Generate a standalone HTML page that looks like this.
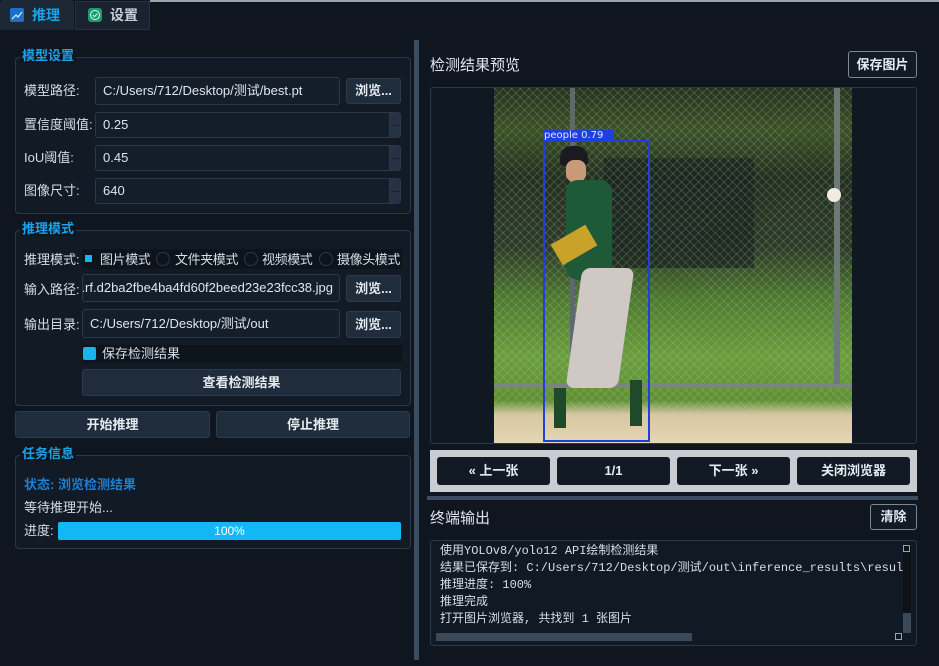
<!DOCTYPE html>
<html><head><meta charset="utf-8"><style>
*{box-sizing:border-box;margin:0;padding:0}
body{width:939px;height:666px;background:#0f1620;position:relative;overflow:hidden;font-family:"Liberation Sans","Noto Sans CJK SC",sans-serif;font-size:13px;line-height:16px;color:#d6dde6}
.a{position:absolute}
.grp{position:absolute;border:1px solid #2a3848;border-radius:4px;background:#111a25}
.gt{position:absolute;color:#1aa3e8;font-weight:bold;font-size:13px;background:#0f1620;padding:0 2px;line-height:14px}
.inp{position:absolute;background:#141e2a;border:1px solid #2a3848;border-radius:3px;color:#dfe5ec;padding-left:7px;line-height:24px;white-space:nowrap;overflow:hidden}
.btn{position:absolute;background:#1f2c3c;border:1px solid #2c3b4d;border-radius:3px;color:#e6ebf0;font-weight:bold;text-align:center;font-size:13px}
.lbl{position:absolute;color:#d6dde6;transform:translateY(-3px)}
.spin{position:absolute;right:0;width:11px;top:0;bottom:0;background:#243244;border-left:1px solid #2a3848}
.spin:after{content:"";position:absolute;left:0;right:0;top:50%;height:1px;background:#1a2430}
.nb{position:absolute;top:457px;height:28px;width:113px;background:#121a26;border-radius:3px;color:#e6ebf0;font-weight:bold;text-align:center;line-height:28px;font-size:13px}
.mono{font-family:"Liberation Mono","Noto Sans CJK SC",monospace;font-size:12px;line-height:17px;white-space:nowrap;color:#d6dde6}
</style></head><body>
<!-- tabs -->
<div class="a" style="left:150px;top:0;width:789px;height:2px;background:#9aa4ad"></div>
<div class="a" style="left:0;top:0;width:74px;height:30px;background:#1d2836;border-radius:3px 3px 0 0"></div>
<div class="a" style="left:10px;top:8px;width:14px;height:14px;background:#1d6fc7;border-radius:2px"><svg width="14" height="14"><path d="M2 11 L6 7 L8 9 L12 4" stroke="#cfe6ff" stroke-width="1.3" fill="none"/></svg></div>
<div class="a" style="left:32px;top:7px;color:#1aa3e8;font-weight:bold;font-size:14px">推理</div>
<div class="a" style="left:75px;top:1px;width:75px;height:29px;background:#19222e;border:1px solid #263240"></div>
<div class="a" style="left:88px;top:8px;width:14px;height:14px;background:#1c9a72;border-radius:3px"><svg width="14" height="14"><circle cx="7" cy="7" r="4.5" stroke="#d8fff0" fill="none" stroke-width="1"/><path d="M4.8 7 L6.5 8.6 L9.3 5.6" stroke="#d8fff0" fill="none" stroke-width="1.1"/></svg></div>
<div class="a" style="left:110px;top:7px;color:#c8d0d8;font-weight:bold;font-size:14px">设置</div>

<!-- splitter -->
<div class="a" style="left:414px;top:40px;width:5px;height:620px;background:#3a4d62"></div>

<!-- 模型设置 -->
<div class="grp" style="left:15px;top:57px;width:396px;height:157px"></div>
<div class="gt" style="left:20px;top:49px">模型设置</div>
<div class="lbl" style="left:24px;top:86px">模型路径:</div>
<div class="inp" style="left:95px;top:77px;width:245px;height:28px;line-height:26px">C:/Users/712/Desktop/测试/best.pt</div>
<div class="btn" style="left:346px;top:78px;width:55px;height:26px;line-height:24px">浏览...</div>
<div class="lbl" style="left:24px;top:120px">置信度阈值:</div>
<div class="inp" style="left:95px;top:112px;width:306px;height:26px">0.25<div class="spin"></div></div>
<div class="lbl" style="left:24px;top:153px">IoU阈值:</div>
<div class="inp" style="left:95px;top:145px;width:306px;height:26px">0.45<div class="spin"></div></div>
<div class="lbl" style="left:24px;top:186px">图像尺寸:</div>
<div class="inp" style="left:95px;top:178px;width:306px;height:26px">640<div class="spin"></div></div>

<!-- 推理模式 -->
<div class="grp" style="left:15px;top:230px;width:396px;height:176px"></div>
<div class="gt" style="left:20px;top:222px">推理模式</div>
<div class="lbl" style="left:24px;top:255px">推理模式:</div>
<div class="a" style="left:82px;top:249px;width:320px;height:20px;background:#0d141c"></div>
<div class="a" style="left:85px;top:255px;width:7px;height:7px;background:#18b4ee"></div>
<div class="lbl" style="left:100px;top:255px;letter-spacing:-0.4px">图片模式</div>
<div class="a" style="left:156px;top:252px;width:14px;height:14px;border:1px solid #2a3848;border-radius:50%"></div>
<div class="lbl" style="left:175px;top:255px;letter-spacing:-0.4px">文件夹模式</div>
<div class="a" style="left:244px;top:252px;width:14px;height:14px;border:1px solid #2a3848;border-radius:50%"></div>
<div class="lbl" style="left:262px;top:255px;letter-spacing:-0.4px">视频模式</div>
<div class="a" style="left:319px;top:252px;width:14px;height:14px;border:1px solid #2a3848;border-radius:50%"></div>
<div class="lbl" style="left:337px;top:255px;letter-spacing:-0.4px">摄像头模式</div>
<div class="lbl" style="left:24px;top:285px">输入路径:</div>
<div class="inp" style="left:82px;top:274px;width:258px;height:28px;line-height:26px;padding-left:0"><span style="position:absolute;right:6px;top:0">g.rf.d2ba2fbe4ba4fd60f2beed23e23fcc38.jpg</span></div>
<div class="btn" style="left:346px;top:275px;width:55px;height:27px;line-height:25px">浏览...</div>
<div class="lbl" style="left:24px;top:320px">输出目录:</div>
<div class="inp" style="left:82px;top:309px;width:258px;height:29px;line-height:27px">C:/Users/712/Desktop/测试/out</div>
<div class="btn" style="left:346px;top:311px;width:55px;height:27px;line-height:25px">浏览...</div>
<div class="a" style="left:82px;top:345px;width:320px;height:18px;background:#0d141c"></div>
<div class="a" style="left:83px;top:347px;width:13px;height:13px;background:#18b4ee;border-radius:2px"></div>
<div class="lbl" style="left:102px;top:349px">保存检测结果</div>
<div class="btn" style="left:82px;top:369px;width:319px;height:27px;line-height:25px">查看检测结果</div>

<div class="btn" style="left:15px;top:411px;width:195px;height:27px;line-height:25px">开始推理</div>
<div class="btn" style="left:216px;top:411px;width:194px;height:27px;line-height:25px">停止推理</div>

<!-- 任务信息 -->
<div class="grp" style="left:15px;top:455px;width:396px;height:94px"></div>
<div class="gt" style="left:20px;top:447px">任务信息</div>
<div class="a" style="left:24px;top:477px;color:#1d7fd6;font-weight:bold">状态: 浏览检测结果</div>
<div class="lbl" style="left:24px;top:503px">等待推理开始...</div>
<div class="lbl" style="left:24px;top:526px">进度:</div>
<div class="a" style="left:58px;top:522px;width:343px;height:18px;background:#12b8f5;border-radius:2px;color:#fff;text-align:center;line-height:18px;font-size:12px">100%</div>

<!-- right -->
<div class="a" style="left:430px;top:58px;font-size:15px;color:#dfe5ec">检测结果预览</div>
<div class="btn" style="left:848px;top:51px;width:69px;height:27px;line-height:25px;background:#121a26;border:1px solid #7d8895">保存图片</div>
<div class="a" style="left:430px;top:87px;width:487px;height:357px;border:1px solid #2a3848;border-radius:3px;background:#101821"></div>
<!-- photo -->
<div class="a" style="left:494px;top:88px;width:358px;height:355px;overflow:hidden;background:linear-gradient(180deg,#26331e 0%,#3a5226 12%,#24301f 25%,#2c3b26 45%,#4f7c2e 60%,#6a9e3a 76%,#5f9032 88%,#d8c8a0 92%,#e4d6b4 100%)">
 <div class="a" style="left:110px;top:70px;width:150px;height:110px;background:#1a241e;opacity:.7"></div>
 <div class="a" style="left:0;top:0;width:358px;height:330px;background:repeating-linear-gradient(45deg,transparent 0 5px,rgba(190,200,200,.2) 5px 6px),repeating-linear-gradient(-45deg,transparent 0 5px,rgba(190,200,200,.2) 5px 6px)"></div>
 <div class="a" style="left:76px;top:0;width:5px;height:300px;background:#5e6a68"></div>
 <div class="a" style="left:340px;top:0;width:6px;height:300px;background:#6e7876"></div>
 <div class="a" style="left:0;top:296px;width:358px;height:4px;background:#7a8480"></div>
 <div class="a" style="left:333px;top:100px;width:14px;height:14px;border-radius:50%;background:#f0ece0"></div>
 <!-- player -->
 <div class="a" style="left:66px;top:58px;width:28px;height:20px;border-radius:12px 12px 4px 4px;background:#1a1a20"></div>
 <div class="a" style="left:72px;top:72px;width:20px;height:22px;border-radius:8px;background:#c89a78"></div>
 <div class="a" style="left:72px;top:92px;width:46px;height:100px;border-radius:12px;background:#1f5a38"></div>
 <div class="a" style="left:80px;top:180px;width:52px;height:120px;background:#cfc8c4;border-radius:8px;transform:skewX(-8deg)"></div>
 <div class="a" style="left:60px;top:300px;width:12px;height:40px;background:#1f4a2a"></div>
 <div class="a" style="left:136px;top:292px;width:12px;height:46px;background:#1f4a2a"></div>
 <div class="a" style="left:60px;top:145px;width:40px;height:24px;background:#c9a22a;transform:rotate(-30deg)"></div>
</div>
<div class="a" style="left:543px;top:140px;width:107px;height:302px;border:2px solid #1f3fe0"></div>
<div class="a" style="left:543px;top:130px;width:71px;height:11px;background:#1f3fe0;color:#dfe6ff;font-family:'DejaVu Sans',sans-serif;font-size:10px;line-height:11px;padding-left:1px">people 0.79</div>

<!-- nav -->
<div class="a" style="left:430px;top:450px;width:487px;height:42px;background:#c9cdd2"></div>
<div class="nb" style="left:437px">« 上一张</div>
<div class="nb" style="left:557px">1/1</div>
<div class="nb" style="left:677px">下一张 »</div>
<div class="nb" style="left:797px">关闭浏览器</div>
<div class="a" style="left:427px;top:496px;width:491px;height:4px;background:#3a4d62"></div>

<div class="a" style="left:430px;top:511px;font-size:15px;color:#dfe5ec">终端输出</div>
<div class="btn" style="left:870px;top:504px;width:47px;height:26px;line-height:24px;background:#121a26;border:1px solid #7d8895">清除</div>
<div class="a" style="left:430px;top:540px;width:487px;height:106px;border:1px solid #2a3848;border-radius:3px;background:#111a24;overflow:hidden">
 <div class="mono" style="position:absolute;left:9px;top:2px;width:463px;overflow:hidden">使用YOLOv8/yolo12 API绘制检测结果<br>结果已保存到: C:/Users/712/Desktop/测试/out\inference_results\result_0<br>推理进度: 100%<br>推理完成<br>打开图片浏览器, 共找到 1 张图片</div>
 <div class="a" style="left:5px;top:92px;width:256px;height:8px;background:#3a4858"></div>
 <div class="a" style="left:472px;top:3px;width:8px;height:89px;background:#0c1218"></div>
 <div class="a" style="left:472px;top:72px;width:8px;height:20px;background:#3a4858"></div>
 <div class="a" style="left:472px;top:4px;width:7px;height:7px;border:1px solid #9aa4ad"></div>
 <div class="a" style="left:464px;top:92px;width:7px;height:7px;border:1px solid #9aa4ad"></div>
</div>
</body></html>
